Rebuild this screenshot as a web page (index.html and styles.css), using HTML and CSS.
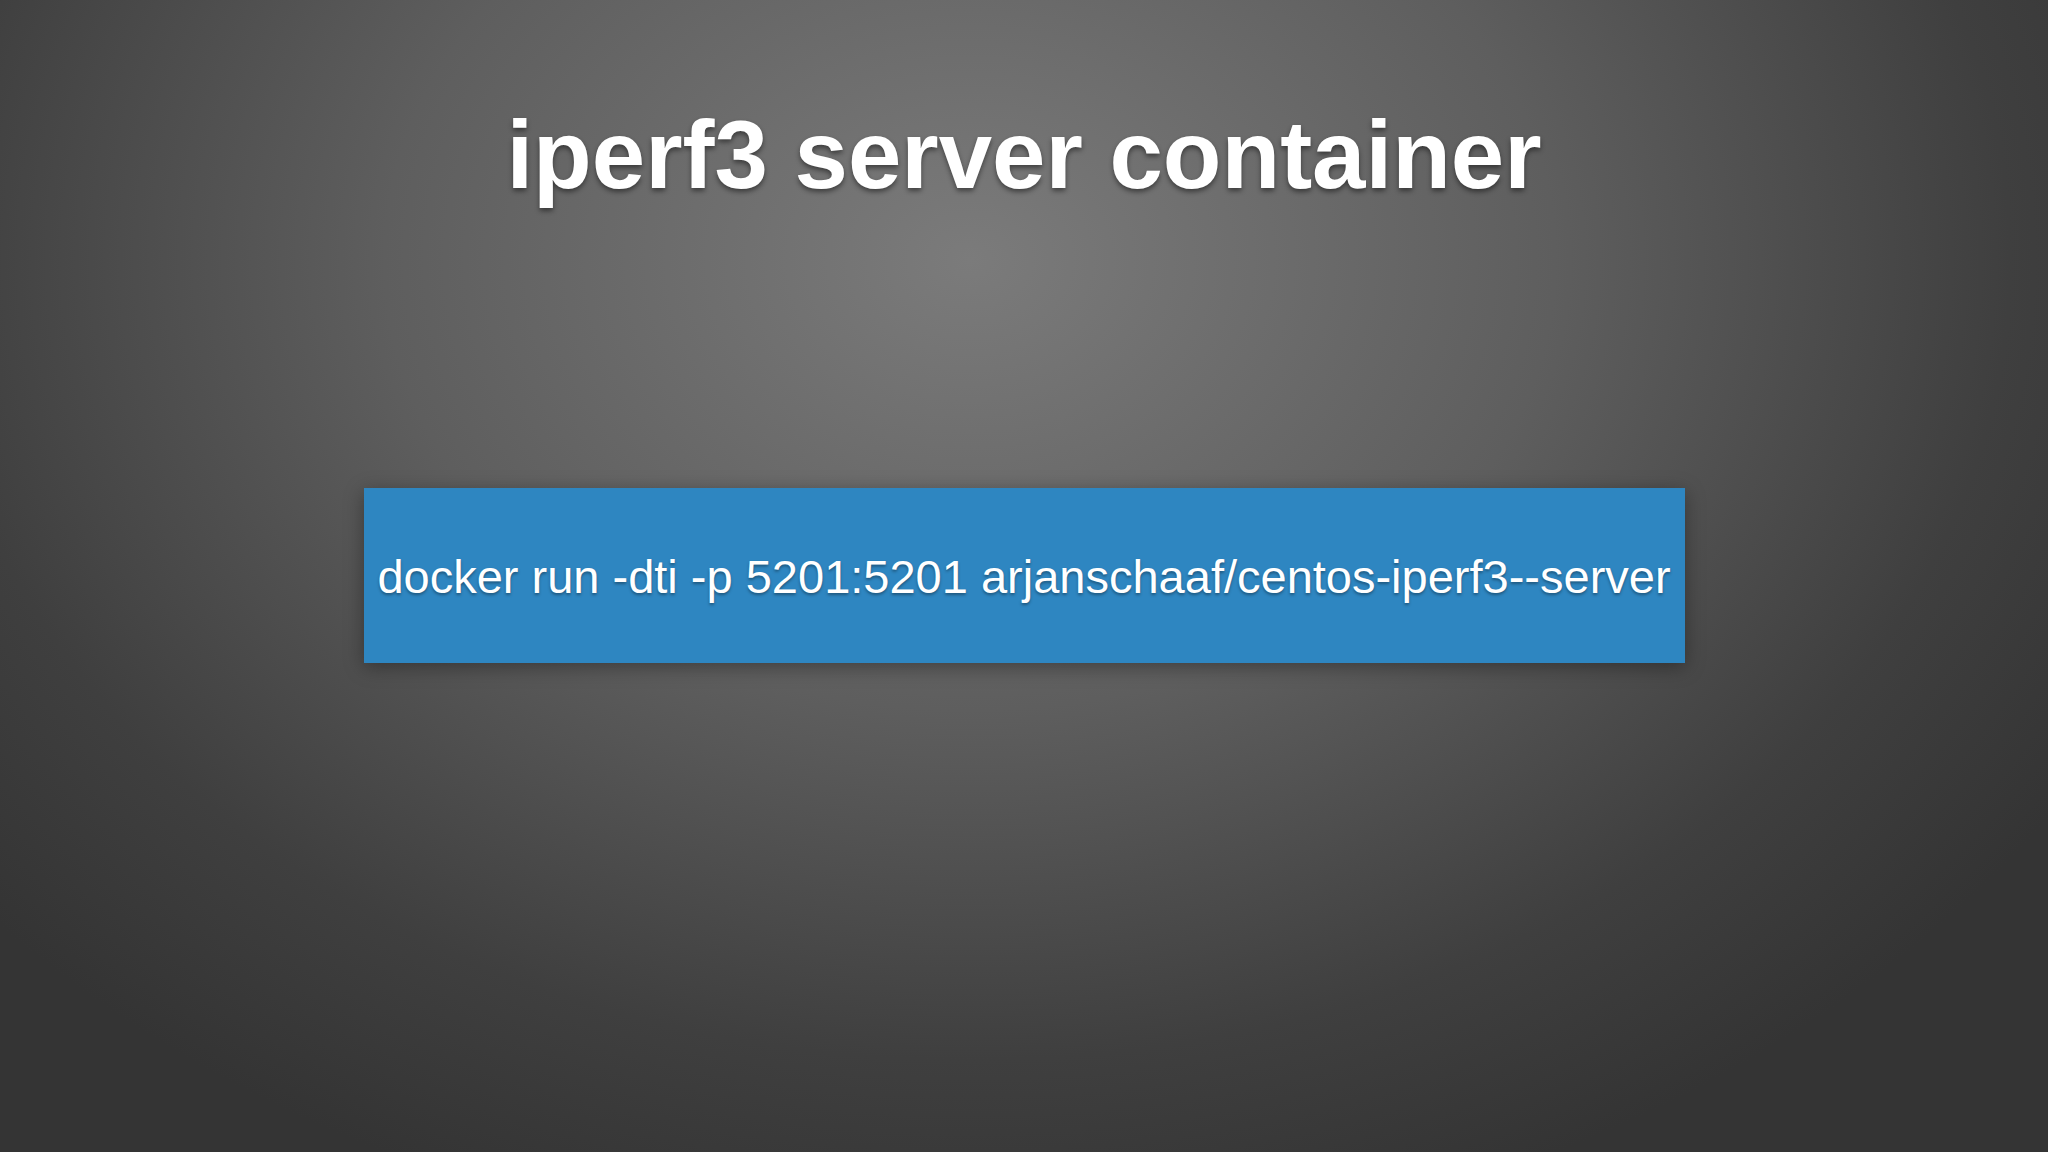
FILE: index.html
```html
<!DOCTYPE html>
<html lang="en">
<head>
    <meta charset="UTF-8">
    <title>iperf3 server container</title>
    <link rel="stylesheet" href="styles.css">
</head>
<body>
    <div class="slide">
        <h1 class="title">iperf3 server container</h1>
        <div class="command">
            <span>docker run -dti -p 5201:5201 arjanschaaf/centos-iperf3--server</span>
        </div>
    </div>
</body>
</html>
```
FILE: styles.css
```css
html, body {
    margin: 0;
    padding: 0;
}
body {
    width: 2048px;
    height: 1152px;
    overflow: hidden;
    font-family: "Liberation Sans", Arial, sans-serif;
    background: radial-gradient(ellipse 1300px 1000px at 970px 260px, #7b7b7b 0%, #5e5e5e 45%, #3f3f3f 80%, #343434 100%);
}
.slide {
    display: flex;
    flex-direction: column;
    align-items: center;
}
.title {
    margin: 107px 0 0;
    font-size: 96px;
    line-height: 1;
    font-weight: bold;
    color: #fff;
    text-shadow: 0 3px 5px rgba(0,0,0,0.45);
}
.command {
    margin-top: 285px;
    width: 1321px;
    height: 175px;
    background: #2e86c1;
    display: flex;
    align-items: center;
    justify-content: center;
    box-shadow: 0 4px 18px rgba(0,0,0,0.35);
}
.command span {
    padding-top: 2px;
    font-size: 47px;
    line-height: 1;
    color: #fff;
    text-shadow: 0 2px 3px rgba(0,0,0,0.35);
}
```
